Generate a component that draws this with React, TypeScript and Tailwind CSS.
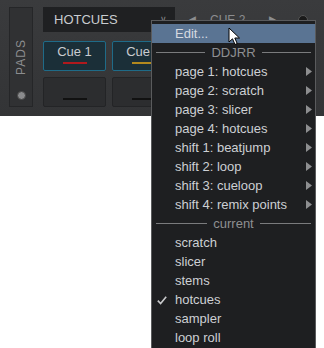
import React from 'react';

const font = { fontFamily: '"Liberation Sans", Arial, sans-serif' };

function Arrow() {
    return (
        <svg width="6" height="9" viewBox="0 0 6 9" className="absolute right-[3px] top-[5px]">
            <path d="M0 0 L6 4.5 L0 9 Z" fill="#8d8e90" />
        </svg>
    );
}

function Separator({ label }: { label: string }) {
    return (
        <div className="h-[19px] flex items-center px-[4px] gap-[6px]">
            <div className="flex-1 h-px bg-[#7a7b7d]" />
            <span className="text-[13px] text-[#8e8f91] leading-[19px]">{label}</span>
            <div className="flex-1 h-px bg-[#7a7b7d]" />
        </div>
    );
}

function Item({ label, sub, checked }: { label: string; sub?: boolean; checked?: boolean }) {
    return (
        <div className="relative h-[19px] pl-[23px] text-[13px] leading-[19px] text-[#cdd0d4]">
            {checked && (
                <svg width="10" height="9" viewBox="0 0 10 9" className="absolute left-[5px] top-[6px]">
                    <path d="M0.8 4.6 L3.6 7.6 L9.2 0.8" stroke="#c9cacc" strokeWidth="1.6" fill="none" />
                </svg>
            )}
            {label}
            {sub && <Arrow />}
        </div>
    );
}

function Pad({ label, color, active }: { label?: string; color: string; active?: boolean }) {
    return (
        <div className={active
            ? "w-[63px] h-[30px] rounded-[2px] border border-[#1f6b88] bg-[#1b2f38] flex flex-col items-center justify-end pb-[6px]"
            : "w-[63px] h-[30px] rounded-[2px] border border-[#232426] bg-[#2c2d2f] flex flex-col items-center justify-end pb-[6px]"}>
            {label && <span className="text-[13px] leading-[15px] text-[#c9ccd0] mb-[3px]">{label}</span>}
            <div className="w-[24px] h-[2px]" style={{ background: color }} />
        </div>
    );
}

export default function App() {
    const pages = ['page 1: hotcues', 'page 2: scratch', 'page 3: slicer', 'page 4: hotcues',
        'shift 1: beatjump', 'shift 2: loop', 'shift 3: cueloop', 'shift 4: remix points'];
    const current = ['scratch', 'slicer', 'stems', 'hotcues', 'sampler', 'loop roll'];

    return (
        <div className="relative w-[324px] h-[348px] bg-white overflow-hidden" style={font}>
            {/* deck panel */}
            <div className="h-[116px] bg-gradient-to-b from-[#3a3b3d] to-[#333436] flex gap-[10px] pl-[9px] pt-[7px]">
                <div className="w-[24px] h-[100px] bg-[#303133] border border-[#252628] flex flex-col items-center justify-between pt-[42px] pb-[6px]">
                    <span className="text-[12px] leading-[14px] text-[#8c8d8f] tracking-[1px] -rotate-90">PADS</span>
                    <div className="w-[9px] h-[9px] rounded-full bg-[#8a8b8d] border border-[#444]" />
                </div>
                <div className="flex flex-col">
                    <div className="flex items-center h-[25px]">
                        <div className="w-[132px] h-[25px] bg-[#1f2022] flex items-center pl-[11px] pr-[8px] justify-between">
                            <span className="text-[13px] text-[#c9ccd0]">HOTCUES</span>
                            <span className="text-[9px] text-[#8c8d8f]">∨</span>
                        </div>
                        <div className="flex items-center text-[#8c8d8f] text-[12px]">
                            <span className="ml-[14px] text-[9px]">◀</span>
                            <span className="ml-[14px]">CUE 2</span>
                            <span className="ml-[24px] text-[9px]">▶</span>
                            <div className="ml-[22px] w-[10px] h-[10px] rounded-full bg-[#1a1a1a] border border-[#555]" />
                        </div>
                    </div>
                    {/* pads 3 and 4 sit under the menu */}
                    <div className="grid grid-cols-[63px_63px_63px_63px] gap-[6px] mt-[9px]">
                        <Pad label="Cue 1" color="#b0191d" active />
                        <Pad label="Cue 2" color="#b3891e" active />
                        <Pad color="#111" active />
                        <Pad color="#111" active />
                        <Pad color="#111" />
                        <Pad color="#111" />
                        <Pad color="#111" />
                        <Pad color="#111" />
                    </div>
                </div>
            </div>

            {/* context menu */}
            <div className="absolute left-[151px] top-[20px] w-[165px] h-[340px] border border-[#5a5b5d] bg-[#1e1f21] pt-[3px]">
                <div className="h-[19px] bg-[#5a7493] pl-[23px] text-[13px] leading-[19px] text-[#d6dae0]">Edit...</div>
                <Separator label="DDJRR" />
                {pages.map((p) => <Item key={p} label={p} sub />)}
                <Separator label="current" />
                {current.map((c) => <Item key={c} label={c} checked={c === 'hotcues'} />)}
            </div>

            {/* mouse cursor */}
            <svg width="13" height="19" viewBox="0 0 13 19" className="absolute left-[228px] top-[27px]">
                <path d="M1 1 L1 15 L4.5 11.8 L7 17.5 L9.2 16.5 L6.8 11 L11.5 11 Z" fill="#fff" stroke="#000" strokeWidth="1" strokeLinejoin="round" />
            </svg>
        </div>
    );
}
